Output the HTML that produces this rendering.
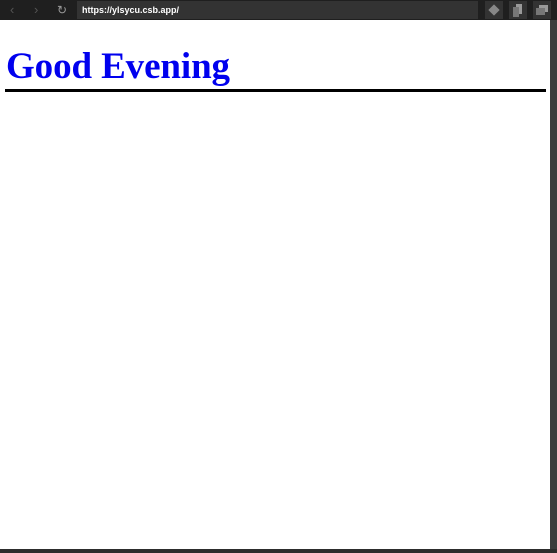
<!DOCTYPE html>
<html><head><style>
html,body{margin:0;padding:0;width:557px;height:553px;overflow:hidden;background:#fff;}
.bar{position:absolute;left:0;top:0;width:557px;height:20px;background:#1f1f1f;}
.addr{position:absolute;left:77px;top:1px;width:401px;height:18px;background:#333;color:#fff;font:bold 9px "Liberation Sans",sans-serif;line-height:18px;padding-left:5px;box-sizing:border-box;}
.ib{position:absolute;top:1px;width:18px;height:18px;background:#333;}
.nav{position:absolute;top:2px;color:#555;font:13px "Liberation Sans",sans-serif;}
.rb{position:absolute;left:550px;top:20px;width:7px;height:533px;background:#3c3c3c;}
.bb{position:absolute;left:0;top:549px;width:557px;height:4px;background:#2d2d2d;}
h1{position:absolute;left:6px;top:45px;margin:0;font:bold 37px "Liberation Serif",serif;color:#0000ee;line-height:44px;white-space:nowrap;letter-spacing:-0.1px;}
.ul{position:absolute;left:5px;top:89px;width:541px;height:3px;background:#000;}
</style></head><body>
<div class="bar">
<span class="nav" style="left:10px">&#8249;</span>
<span class="nav" style="left:34px">&#8250;</span>
<span class="nav" style="left:57px;color:#999;font-size:12px;top:3px">&#8635;</span>
<div class="addr">https://ylsycu.csb.app/</div>
<div class="ib" style="left:485px"><div style="position:absolute;left:5px;top:5px;width:8px;height:8px;background:#888;transform:rotate(45deg)"></div></div>
<div class="ib" style="left:509px"><div style="position:absolute;left:7px;top:3px;width:6px;height:10px;background:#999"></div><div style="position:absolute;left:4px;top:6px;width:6px;height:10px;background:#777"></div></div>
<div class="ib" style="left:533px"><div style="position:absolute;left:6px;top:4px;width:9px;height:7px;background:#999"></div><div style="position:absolute;left:3px;top:7px;width:9px;height:7px;background:#777"></div></div>
</div>
<h1>Good Evening</h1>
<div class="ul"></div>
<div class="rb"></div>
<div class="bb"></div>
</body></html>
